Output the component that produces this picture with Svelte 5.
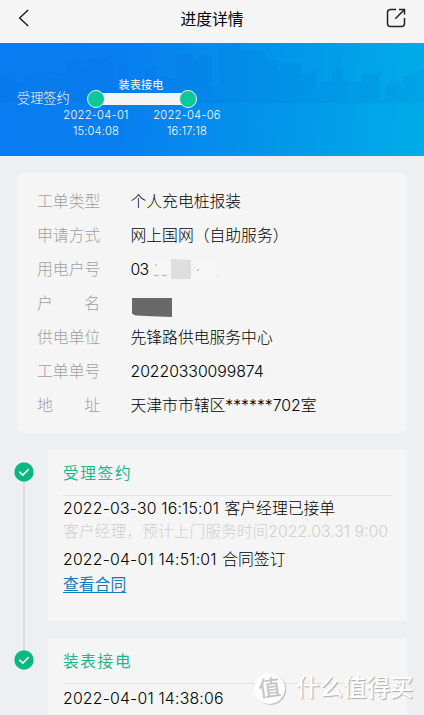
<script lang="ts">
	type Detail = { label: string; value: string; kind?: 'latin' | 'account' | 'name' };

	const details: Detail[] = [
		{ label: '工单类型', value: '个人充电桩报装' },
		{ label: '申请方式', value: '网上国网（自助服务）' },
		{ label: '用电户号', value: '03', kind: 'account' },
		{ label: '户名', value: '', kind: 'name' },
		{ label: '供电单位', value: '先锋路供电服务中心' },
		{ label: '工单单号', value: '20220330099874', kind: 'latin' },
		{ label: '地址', value: '天津市市辖区******702室' }
	];

	const stops = [
		{ date: '2022-04-01', time: '15:04:08' },
		{ date: '2022-04-06', time: '16:17:18' }
	];
</script>

<div class="page">
	<header class="topbar">
		<svg class="back" viewBox="0 0 12 18" aria-hidden="true">
			<path d="M10.2 1 L1.6 9 L10.2 17" />
		</svg>
		<h1>进度详情</h1>
		<svg class="share" viewBox="0 0 20 20" aria-hidden="true">
			<path d="M10 1.5 H4.5 Q1.5 1.5 1.5 4.5 V15.5 Q1.5 18.5 4.5 18.5 H15.5 Q18.5 18.5 18.5 15.5 V10" />
			<path d="M9.3 10.7 L18.2 1.8 M13 1.5 H18.5 V6.5" />
		</svg>
	</header>

	<section class="banner">
		<svg class="skyline" viewBox="0 0 424 60" preserveAspectRatio="none" aria-hidden="true">
			<path
				d="M0 60 V34 H14 V40 H26 V34 H52 V36 H61 V31 H67 V18 H84 V24 H89 V16 H98 V14 H109 V18 H114 V38 H118 V22 H128 V38 H137 V34 H146 V26 H150 V24 H157 V33 H168 V36 H176 V15 L181 10 H189 L194 15 V17 H197 V12 H212 V42 H219 V2 H242 V8 H262 L268 14 V17 H277 V26 H281 V20 H301 V32 H309 V27 H316 V44 H320 V39 H332 V29 L338 22 V14 H339 V22 L344 27 V38 H350 V60 H351 V39 H362 V31 H378 V27 H380 V57 H385 V42 L395 37 L403 42 V34 L415 29 L424 26 V60 Z"
			/>
		</svg>
		<span class="phase">受理签约</span>
		<div class="progress">
			<span class="stage">装表接电</span>
			<div class="track"><i></i><i></i></div>
			<div class="stops">
				{#each stops as stop}
					<div class="stop">
						<span>{stop.date}</span>
						<span class="time">{stop.time}</span>
					</div>
				{/each}
			</div>
		</div>
	</section>

	<dl class="details">
		{#each details as item}
			<div class="row">
				<dt>
					{#each item.label.split('') as char}<span>{char}</span>{/each}
				</dt>
				<dd class={item.kind}>
					{item.value}
					{#if item.kind === 'account'}
						<svg class="mask" viewBox="0 0 76 20" aria-hidden="true">
							<path d="M0 0 H66 V20 H0 Z" fill="#f6f6f6" />
							<path d="M20 0 L40 1 V20 H20 Z" fill="#dedede" />
							<path d="M4 6 h2 M3 16 q3 2 5 0 M11 16 q3 2 5 0 M46 12 l2-2 M66 17 h1" />
						</svg>
					{:else if item.kind === 'name'}
						<svg class="block" viewBox="0 0 40 19" aria-hidden="true">
							<path d="M0 0 H40 V19 L20 18.3 L4 17.5 Q1 16.5 0 15.5 Z" />
						</svg>
					{/if}
				</dd>
			</div>
		{/each}
	</dl>

	<ol class="timeline">
		<li>
			<svg class="check" viewBox="0 0 20 20" aria-hidden="true">
				<circle cx="10" cy="10" r="9.7" />
				<path d="M5.7 10.1 L8.8 13.1 L14.4 7.5" />
			</svg>
			<article>
				<h2>受理签约</h2>
				<p class="event"><time>2022-03-30 16:15:01</time> 客户经理已接单</p>
				<p class="note">客户经理，预计上门服务时间2022.03.31 9:00</p>
				<p class="event second"><time>2022-04-01 14:51:01</time> 合同签订</p>
				<a href="#contract">查看合同</a>
			</article>
		</li>
		<li>
			<svg class="check" viewBox="0 0 20 20" aria-hidden="true">
				<circle cx="10" cy="10" r="9.7" />
				<path d="M5.7 10.1 L8.8 13.1 L14.4 7.5" />
			</svg>
			<article>
				<h2>装表接电</h2>
				<p class="event"><time>2022-04-01 14:38:06</time></p>
			</article>
		</li>
	</ol>

	<div class="watermark">
		<span class="seal">值</span>
		<span>什么值得买</span>
	</div>
</div>

<style>
	:global(body) {
		margin: 0;
		overflow: hidden;
	}

	.page {
		position: relative;
		width: 424px;
		height: 715px;
		overflow: hidden;
		background: #eeeff1;
		color: #000;
		font-family: Inter, 'Noto Sans CJK SC', sans-serif;
		font-size: 15.8px;
		font-weight: 300;
	}

	svg {
		display: block;
		fill: none;
	}

	h1,
	h2,
	p,
	dl,
	dd,
	ol {
		margin: 0;
		padding: 0;
	}

	.topbar {
		display: flex;
		align-items: center;
		justify-content: space-between;
		box-sizing: border-box;
		height: 43px;
		padding: 0 18px 7px;
		background: #f5f5f5;
	}

	h1 {
		font-size: 15.8px;
		font-weight: 400;
	}

	.back {
		width: 12px;
		height: 18px;
		margin-right: 8px;
		stroke: #111;
		stroke-width: 1.3;
	}

	.share {
		width: 20px;
		height: 20px;
		stroke: #222;
		stroke-width: 1.5;
	}

	.banner {
		position: relative;
		display: flex;
		box-sizing: border-box;
		height: 113px;
		padding-left: 17px;
		color: #fff;
		background: linear-gradient(95deg, #087cf0 0%, #087ff0 30%, #0297e9 66%, #00ade8 100%);
	}

	.skyline {
		position: absolute;
		top: 0;
		left: 0;
		width: 424px;
		height: 60px;
		fill: rgba(0, 98, 210, 0.11);
	}

	.phase {
		position: relative;
		width: 45px;
		padding-top: 45px;
		font-size: 13.2px;
		font-weight: 300;
		line-height: 20px;
		white-space: nowrap;
	}

	.progress {
		position: relative;
		width: 160px;
		padding-top: 34px;
	}

	.stage {
		display: block;
		margin-right: 2px;
		font-size: 11.2px;
		font-weight: 400;
		line-height: 16px;
		text-align: center;
	}

	.track {
		display: flex;
		align-items: center;
		justify-content: space-between;
		height: 12px;
		margin: 0 30px;
		background: #f5f5f5;
	}

	.track i {
		box-sizing: border-box;
		width: 18px;
		height: 18px;
		margin: 0 -5px;
		border: 1.5px solid #e4f8f3;
		border-radius: 50%;
		background: #0bc79a;
	}

	.stops {
		display: flex;
		justify-content: space-between;
		margin: 2px 0 0 -1px;
	}

	.stop {
		display: flex;
		flex-direction: column;
		width: 70px;
		font-size: 11.2px;
		line-height: 16px;
		letter-spacing: 0.25px;
		text-align: center;
		white-space: nowrap;
	}

	.time {
		letter-spacing: 0.1px;
	}

	.details {
		box-sizing: border-box;
		height: 260px;
		margin: 17px 17px 0;
		padding: 12px 20px 10px;
		border-radius: 7px;
		background: #f5f5f5;
	}

	.row {
		display: flex;
		height: 34px;
		line-height: 34px;
	}

	dt {
		display: flex;
		justify-content: space-between;
		width: 63px;
		margin-right: 30.5px;
		color: #a0a0a0;
	}

	dd {
		display: flex;
		align-items: center;
		white-space: nowrap;
	}

	.latin {
		letter-spacing: -0.05px;
	}

	.account {
		letter-spacing: -0.8px;
	}

	.mask {
		width: 76px;
		height: 20px;
		margin-left: 3px;
		margin-top: -3px;
		stroke: #888;
		stroke-width: 0.7;
	}

	.mask path:not(:last-child) {
		stroke: none;
	}

	.block {
		width: 40px;
		height: 19px;
		margin: 6px 0 0 1px;
		fill: #686868;
	}

	.timeline {
		margin-top: 17px;
		list-style: none;
	}

	li {
		position: relative;
		display: flex;
		align-items: flex-start;
		margin: 0 17px 17px 14px;
	}

	/* line joining one step's tick to the next */
	li:first-child::before {
		content: '';
		position: absolute;
		top: 22px;
		left: 9px;
		width: 2px;
		height: 188px;
		background: #dcdddf;
	}

	.check {
		position: relative;
		width: 20px;
		height: 20px;
		margin: 12px 14px 0 0;
	}

	.check circle {
		fill: #08b883;
	}

	.check path {
		stroke: #fff;
		stroke-width: 1.5;
		stroke-linecap: round;
	}

	article {
		box-sizing: border-box;
		width: 359px;
		height: 171px;
		padding: 0 15px;
		background: #f5f5f5;
		white-space: nowrap;
	}

	h2 {
		box-sizing: border-box;
		height: 46px;
		margin-bottom: 1px;
		border-bottom: 1px solid #e2e3e4;
		color: #18b78c;
		font-size: 15.6px;
		font-weight: 400;
		line-height: 47px;
		letter-spacing: 1.7px;
	}

	.event {
		line-height: 24px;
	}

	time {
		margin-right: 1px;
		letter-spacing: 0.2px;
	}

	.note {
		line-height: 22px;
		color: #d0d0d0;
	}

	.second {
		margin-top: 5px;
	}

	a {
		display: block;
		width: max-content;
		color: #147eb8;
		font-weight: 400;
		line-height: 26px;
		text-underline-offset: 2px;
	}

	li:last-child .event {
		line-height: 27px;
	}

	.watermark {
		position: absolute;
		left: 254px;
		top: 671px;
		display: flex;
		align-items: center;
		gap: 11px;
		color: #fff;
		font-size: 23.5px;
		font-weight: 500;
		line-height: 34px;
		white-space: nowrap;
		text-shadow: 1px 1px 1px #aaa;
	}

	.seal {
		width: 31px;
		height: 31px;
		border-radius: 50%;
		background: #fff;
		box-shadow: 1px 1px 1px #bbb;
		color: #c4c4c4;
		font-size: 22px;
		line-height: 30px;
		text-align: center;
		text-shadow: none;
		transform: rotate(-8deg);
	}
</style>
